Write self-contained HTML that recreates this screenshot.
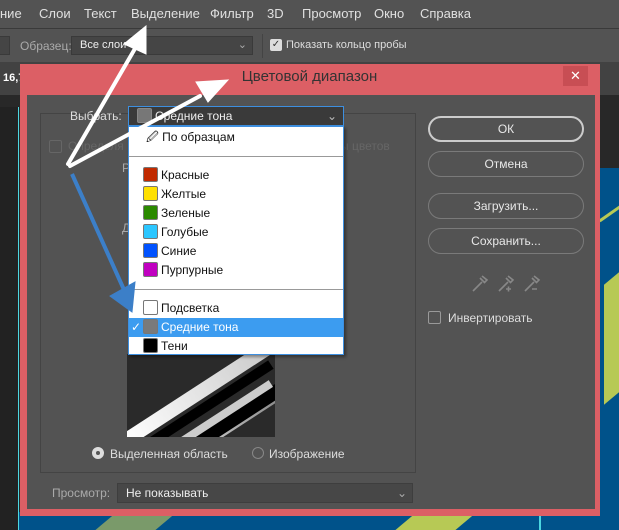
<!DOCTYPE html>
<html><head><meta charset="utf-8"><style>
*{margin:0;padding:0;box-sizing:border-box}
body{width:619px;height:530px;overflow:hidden;background:#282828;font-family:"Liberation Sans","DejaVu Sans",sans-serif;font-size:12px;color:#ddd;position:relative}
.a{position:absolute}
.btn{position:absolute;left:428px;width:156px;height:26px;border:1px solid #7a7a7a;border-radius:13px;text-align:center;line-height:24px;color:#e8e8e8;font-size:12px}
.mi{position:absolute;left:14px;height:19px;line-height:19px;font-size:12px;color:#111}
.sw{display:inline-block;width:15px;height:15px;border:1px solid #777;border-radius:2px;vertical-align:-3px;margin-right:3px}
</style></head><body>
<div class="a" style="left:0;top:0;width:619px;height:28px;background:#535353"></div>
<div class="a" style="left:0;top:28px;width:619px;height:1px;background:#3a3a3a"></div>
<div class="a" style="top:6px;left:0;font-size:13px;color:#e0e0e0;white-space:nowrap">
<span class="a" style="left:0">ние</span><span class="a" style="left:39px">Слои</span><span class="a" style="left:84px">Текст</span><span class="a" style="left:131px">Выделение</span><span class="a" style="left:210px">Фильтр</span><span class="a" style="left:267px">3D</span><span class="a" style="left:302px">Просмотр</span><span class="a" style="left:374px">Окно</span><span class="a" style="left:420px">Справка</span></div>
<div class="a" style="left:0;top:29px;width:619px;height:33px;background:#535353"></div>
<div class="a" style="left:-4px;top:36px;width:14px;height:19px;border:1px solid #3a3a3a;background:#454545"></div>
<div class="a" style="left:20px;top:39px;color:#aaa">Образец:</div>
<div class="a" style="left:71px;top:36px;width:182px;height:19px;background:#454545;border:1px solid #3a3a3a;color:#eee;padding-left:8px;line-height:17px;font-size:11px">Все слои<span style="position:absolute;right:5px;color:#aaa">⌄</span></div>
<div class="a" style="left:262px;top:34px;width:1px;height:24px;background:#444"></div>
<div class="a" style="left:270px;top:39px;width:12px;height:12px;background:#ddd;border-radius:2px;color:#333;font-size:10px;line-height:12px;text-align:center">✓</div>
<div class="a" style="left:286px;top:39px;color:#ddd;font-size:11px">Показать кольцо пробы</div>
<div class="a" style="left:0;top:62px;width:619px;height:33px;background:#424242"></div>
<div class="a" style="left:3px;top:72px;color:#fff;font-weight:bold;font-size:11px">16,7</div>
<div class="a" style="left:0;top:107px;width:18px;height:423px;background:#222"></div>
<div class="a" style="left:18px;top:107px;width:1px;height:423px;background:#4cd6e0"></div>
<div class="a" style="left:596px;top:168px;width:23px;height:362px;background:#00528a;overflow:hidden">
<div class="a" style="left:0;top:40px;width:40px;height:3px;background:#b7c955;transform:rotate(-35deg)"></div>
<div class="a" style="left:8px;top:100px;width:40px;height:120px;background:#b7c955;transform:skewY(-40deg)"></div></div>
<div class="a" style="left:19px;top:512px;width:580px;height:18px;background:#00528a;overflow:hidden">
<div class="a" style="left:80px;top:0;width:60px;height:30px;background:#7a9a6a;transform:skewX(-50deg)"></div>
<div class="a" style="left:380px;top:0;width:60px;height:30px;background:#b7c955;transform:skewX(-50deg)"></div>
<div class="a" style="left:520px;top:0;width:2px;height:30px;background:#4cd6e0"></div></div>
<div class="a" style="left:20px;top:64px;width:580px;height:452px;background:#dc5f65"></div>
<div class="a" style="left:0;top:68px;width:619px;text-align:center;font-size:15px;color:#333;padding-left:0">Цветовой диапазон</div>
<div class="a" style="left:563px;top:66px;width:25px;height:20px;background:#c84e54;color:#fff;text-align:center;line-height:20px;font-size:13px">✕</div>
<div class="a" style="left:27px;top:95px;width:568px;height:414px;background:#535353"></div>
<div class="a" style="left:40px;top:113px;width:376px;height:360px;border:1px solid #444"></div>
<div class="a" style="left:49px;top:140px;width:13px;height:13px;border:1px solid #666;border-radius:2px"></div>
<div class="a" style="left:68px;top:139px;color:#666">Определя</div>
<div class="a" style="left:340px;top:139px;color:#666">ы цветов</div>
<div class="a" style="left:122px;top:161px;color:#aaa">Р</div>
<div class="a" style="left:122px;top:221px;color:#aaa">Д</div>
<div class="a" style="left:70px;top:109px;color:#ddd;font-size:12px">Выбрать:</div>
<div class="a" style="left:128px;top:106px;width:216px;height:20px;background:#3a3a3a;border:1px solid #3d8fe0;color:#eee;line-height:18px;padding-left:8px"><span class="sw" style="background:#777;border-color:#888"></span>Средние тона<span style="position:absolute;right:6px;color:#bbb">⌄</span></div>
<div class="a" style="left:127px;top:354px;width:148px;height:83px;background:#2a2a2a;overflow:hidden">
<div class="a" style="left:-20px;top:20px;width:220px;height:14px;background:linear-gradient(90deg,#fff,#bbb);transform:rotate(-33deg)"></div>
<div class="a" style="left:10px;top:50px;width:220px;height:16px;background:linear-gradient(90deg,#eee,#555);transform:rotate(-33deg)"></div>
<div class="a" style="left:50px;top:30px;width:200px;height:14px;background:#000;transform:rotate(-33deg)"></div>
<div class="a" style="left:-40px;top:60px;width:200px;height:10px;background:#000;transform:rotate(-33deg)"></div>
<div class="a" style="left:-40px;top:80px;width:200px;height:8px;background:#ccc;transform:rotate(-33deg)"></div>
</div>
<div class="a" style="left:128px;top:126px;width:216px;height:229px;background:#fff;border:1px solid #3d8fe0;box-shadow:2px 2px 3px rgba(0,0,0,.4)">
<div class="mi" style="top:1px;left:17px">🖉 По образцам</div>
<div class="a" style="left:0;top:29px;width:214px;height:1px;background:#999"></div>
<div class="mi" style="top:39px"><span class="sw" style="background:#c12a00"></span>Красные</div>
<div class="mi" style="top:58px"><span class="sw" style="background:#ffe000"></span>Желтые</div>
<div class="mi" style="top:77px"><span class="sw" style="background:#2b8a00"></span>Зеленые</div>
<div class="mi" style="top:96px"><span class="sw" style="background:#2bc6ff"></span>Голубые</div>
<div class="mi" style="top:115px"><span class="sw" style="background:#0052ff"></span>Синие</div>
<div class="mi" style="top:134px"><span class="sw" style="background:#c000c0"></span>Пурпурные</div>
<div class="a" style="left:0;top:162px;width:214px;height:1px;background:#999"></div>
<div class="mi" style="top:172px"><span class="sw" style="background:#fff"></span>Подсветка</div>
<div class="a" style="left:0;top:191px;width:214px;height:19px;background:#3c9cf0"></div>
<div class="mi" style="top:191px;color:#fff"><span class="a" style="left:-12px;color:#fff">✓</span><span class="sw" style="background:#7a7a7a"></span>Средние тона</div>
<div class="mi" style="top:210px"><span class="sw" style="background:#000"></span>Тени</div>
</div>
<div class="a" style="left:92px;top:447px;width:12px;height:12px;border-radius:50%;background:#ddd;border:3px solid #ddd"><div style="width:4px;height:4px;margin:1px;border-radius:50%;background:#555"></div></div>
<div class="a" style="left:110px;top:447px;color:#ddd">Выделенная область</div>
<div class="a" style="left:252px;top:447px;width:12px;height:12px;border-radius:50%;border:1px solid #888"></div>
<div class="a" style="left:269px;top:447px;color:#ddd">Изображение</div>
<div class="a" style="left:52px;top:486px;color:#aaa">Просмотр:</div>
<div class="a" style="left:117px;top:483px;width:296px;height:20px;background:#474747;border:1px solid #3e3e3e;color:#eee;line-height:18px;padding-left:8px">Не показывать<span style="position:absolute;right:5px;color:#aaa">⌄</span></div>
<div class="btn" style="top:116px;border:2px solid #ccc;line-height:22px">ОК</div>
<div class="btn" style="top:151px">Отмена</div>
<div class="btn" style="top:193px">Загрузить...</div>
<div class="btn" style="top:228px">Сохранить...</div>
<svg class="a" style="left:470px;top:272px" width="75" height="22" fill="none" stroke="#888" stroke-width="1.6">
<path d="M3 19l9-9M10 6l5 5M12 4l5 4-3 3"/><path d="M29 19l9-9M36 6l5 5M38 4l5 4-3 3M36 17h5M38.5 14.5v5"/><path d="M55 19l9-9M62 6l5 5M64 4l5 4-3 3M62 17h5"/></svg>
<div class="a" style="left:428px;top:311px;width:13px;height:13px;border:1px solid #999;border-radius:2px"></div>
<div class="a" style="left:448px;top:311px;color:#ddd">Инвертировать</div>
<svg class="a" style="left:0;top:0" width="619" height="530">
<g stroke="#fff" stroke-width="4" fill="#fff" stroke-linecap="round">
<line x1="68" y1="164" x2="140" y2="40"/><polygon points="146,26 124,44 146,54" stroke-width="1"/>
<line x1="70" y1="166" x2="200" y2="96"/><polygon points="228,80 196,82 208,102" stroke-width="1"/>
</g>
<g stroke="#3c7fc8" stroke-width="4" fill="#3c7fc8">
<line x1="72" y1="174" x2="125" y2="292"/><polygon points="132,312 110,296 135,282" stroke-width="1"/>
</g></svg>
</body></html>
